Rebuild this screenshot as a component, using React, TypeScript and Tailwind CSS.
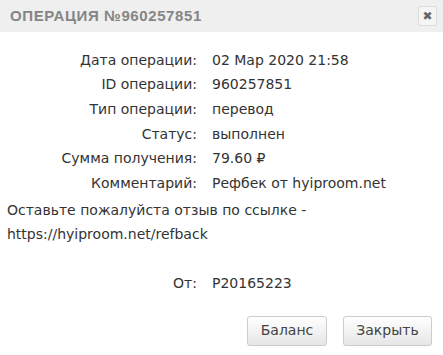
const rows = [
  { label: "Дата операции:", value: "02 Мар 2020 21:58" },
  { label: "ID операции:", value: "960257851" },
  { label: "Тип операции:", value: "перевод" },
  { label: "Статус:", value: "выполнен" },
  { label: "Сумма получения:", value: "79.60 ₽" },
  { label: "Комментарий:", value: "Рефбек от hyiproom.net" },
];

const App = () => {
  return (
    <div
      className="w-[443px] h-[355px] bg-white text-[#333] text-[14px]"
      style={{ fontFamily: '"DejaVu Sans", sans-serif' }}
    >
      <div className="h-[32px] bg-[#efefef] flex items-center justify-between pl-[10px] pr-[6px]">
        <span
          className="text-[15px] font-bold tracking-[0.6px] text-[#858585] uppercase"
          style={{ fontFamily: '"Liberation Sans", sans-serif' }}
        >
          Операция №960257851
        </span>
        <button className="w-[19px] h-[20px] border border-[#ddd] rounded-[2px] bg-[#f5f5f5] flex items-center justify-center text-[#666] text-[12px] font-bold leading-none">
          ✖
        </button>
      </div>

      <div className="pt-[16px]">
        {rows.map((row) => (
          <div key={row.label} className="flex h-[24.6px] items-center">
            <div className="w-[212px] text-right pr-[15px] shrink-0">{row.label}</div>
            <div>{row.value}</div>
          </div>
        ))}
      </div>

      <div className="px-[7px] leading-[24px] mt-[2px]">
        <p>Оставьте пожалуйста отзыв по ссылке -</p>
        <p>https://hyiproom.net/refback</p>
      </div>

      <div className="flex mt-[26px] h-[24px] items-center">
        <div className="w-[212px] text-right pr-[15px] shrink-0">От:</div>
        <div>P20165223</div>
      </div>

      <div className="flex justify-end gap-[16px] pr-[11px] mt-[20px]">
        <button className="w-[80px] h-[30px] border border-[#ccc] rounded-[3px] bg-gradient-to-b from-white to-[#e6e6e6] text-[#444] text-[14px]">
          Баланс
        </button>
        <button className="w-[89px] h-[30px] border border-[#ccc] rounded-[3px] bg-gradient-to-b from-white to-[#e6e6e6] text-[#444] text-[14px]">
          Закрыть
        </button>
      </div>
    </div>
  );
};

export default App;
